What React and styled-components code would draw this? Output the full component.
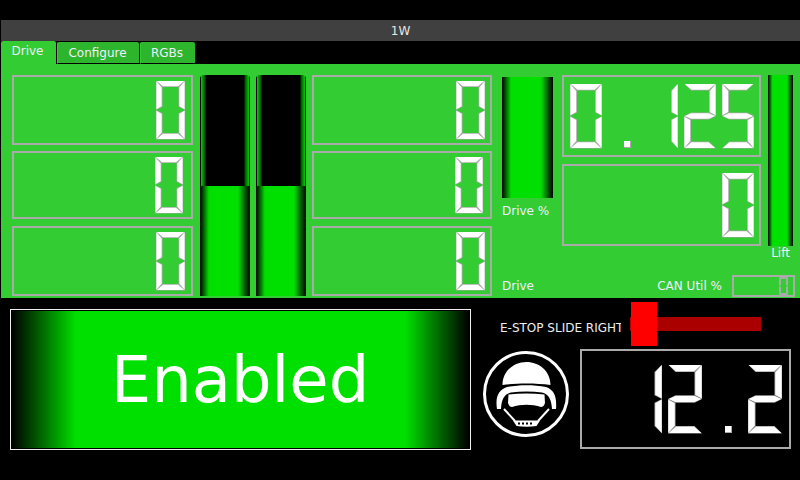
import styled, { createGlobalStyle } from 'styled-components';

const GlobalStyle = createGlobalStyle`
  html, body {
    margin: 0;
    background: #000;
  }
  body {
    width: 800px;
    height: 480px;
    overflow: hidden;
    font-family: "DejaVu Sans", sans-serif;
    font-size: 12px;
  }
`;

const GRAY = '#aaa';
const BAR_GREEN = '#00e000';

const Screen = styled.div`
  width: 800px;
  height: 480px;
  padding-top: 20px;
  box-sizing: border-box;
  display: flex;
  flex-direction: column;
  background: #000;
`;

const TitleBar = styled.div`
  height: 21px;
  margin-left: 1px;
  background: #404040;
  color: #e6e6e6;
  display: flex;
  align-items: center;
  justify-content: center;
`;

const TabBar = styled.div`
  height: 23px;
  display: flex;
  align-items: flex-start;
  padding-left: 1px;
`;

const Tab = styled.div`
  box-sizing: border-box;
  width: ${({ $width }) => $width}px;
  height: ${({ $active }) => ($active ? 23 : 22)}px;
  margin-top: ${({ $active }) => ($active ? 0 : 1)}px;
  margin-right: 1px;
  border-radius: 2px 2px 0 0;
  background: ${({ $active }) => ($active ? '#33cc33' : '#2db52d')};
  border-left: ${({ $active }) => ($active ? 'none' : '1px solid #33cc33')};
  border-bottom: ${({ $active }) => ($active ? 'none' : '1px solid #000')};
  color: #eef;
  display: flex;
  align-items: center;
  justify-content: center;
  padding-bottom: ${({ $active }) => ($active ? 3 : 0)}px;
  padding-right: 2px;
`;

const DrivePanel = styled.div`
  box-sizing: border-box;
  height: 234px;
  margin-left: 1px;
  padding: 11px 5px 1px 11px;
  background: #33cc33;
  display: flex;
  color: #eef;
`;

const LcdColumn = styled.div`
  width: ${({ $width }) => $width}px;
  height: 221px;
  display: flex;
  flex-direction: column;
`;

const LcdFrame = styled.div`
  box-sizing: border-box;
  width: ${({ $width }) => ($width ? `${$width}px` : 'auto')};
  height: ${({ $height }) => $height}px;
  margin: ${({ $gapTop }) => $gapTop || 0}px 0 ${({ $gapBottom }) => $gapBottom || 0}px;
  padding-right: ${({ $pad }) => $pad}px;
  border: 2px solid ${GRAY};
  display: flex;
  align-items: center;
  justify-content: flex-end;
`;

const LcdRow = styled.div`
  display: flex;
  gap: ${({ $gap }) => $gap}px;
`;

const Digit = styled.div`
  width: ${({ $w }) => $w}px;
  height: ${({ $h }) => $h}px;
  display: grid;
`;

const Segment = styled.div`
  grid-area: 1 / 1;
  background: ${({ $tone }) => $tone};
  clip-path: ${({ $points }) => `polygon(${$points})`};
`;

const DotSlot = styled.div`
  box-sizing: border-box;
  width: ${({ $w }) => $w}px;
  padding-left: ${({ $gap }) => $gap}px;
  display: flex;
  align-items: flex-end;
  justify-content: center;
`;

const Dot = styled.div`
  box-sizing: border-box;
  width: ${({ $size }) => $size}px;
  height: ${({ $size }) => $size}px;
  margin-bottom: 1px;
  background: #fff;
  border-right: 1px solid ${GRAY};
  border-bottom: 1px solid ${GRAY};
`;

const BarPair = styled.div`
  display: flex;
  gap: 6px;
  margin: 0 6px 0 7px;
`;

const Bar = styled.div`
  box-sizing: border-box;
  width: ${({ $width }) => $width}px;
  height: ${({ $height }) => $height}px;
  flex: none;
  display: flex;
  flex-direction: column;
  justify-content: flex-end;
  border-radius: ${({ $rounded }) => ($rounded ? '4px 4px 0 0' : '0')};
  background:
    linear-gradient(to right, #000 0, #000 1px, #00d000 1px, #005000 5px, #000 6px,
      #000 calc(100% - 6px), #005000 calc(100% - 5px), #00d000 calc(100% - 1px), #000 calc(100% - 1px));
  overflow: hidden;
`;

const BarFill = styled.div`
  background: linear-gradient(to right, #000 0, ${BAR_GREEN} 18%, ${BAR_GREEN} 76%, #000 100%);
`;

const RightSide = styled.div`
  margin-left: 10px;
  width: 293px;
  height: 222px;
  display: flex;
  flex-direction: column;
  justify-content: space-between;
`;

const RightTop = styled.div`
  display: flex;
`;

const DriveColumn = styled.div`
  width: 60px;
  padding-top: 2px;
  flex: none;
`;

const BarLabel = styled.div`
  margin-top: ${({ $top }) => $top}px;
  white-space: nowrap;
  text-align: ${({ $align }) => $align || 'left'};
`;

const FrameStack = styled.div`
  width: 199px;
  display: flex;
  flex-direction: column;
  gap: 7px;
  margin-right: 7px;
`;

const LiftColumn = styled.div`
  width: 25px;
`;

const RightBottom = styled.div`
  display: flex;
  align-items: center;
  justify-content: space-between;
`;

const CanGroup = styled.div`
  display: flex;
  align-items: center;
  gap: 10px;
`;

const LowerArea = styled.div`
  flex: 1;
  display: flex;
  padding-left: 10px;
`;

const StatusBox = styled.div`
  box-sizing: border-box;
  width: 461px;
  height: 141px;
  margin-top: 11px;
  border: 1px solid #eee;
  padding: 1px;
  background: #000;
`;

const StatusFill = styled.div`
  height: 100%;
  background: linear-gradient(to right, #000 0, ${BAR_GREEN} 14%, ${BAR_GREEN} 86%, #000 100%);
  color: #fff;
  font-size: 64px;
  display: flex;
  align-items: center;
  justify-content: center;
  padding-right: 1px;
`;

const SideColumn = styled.div`
  margin-left: 9px;
  display: flex;
  flex-direction: column;
`;

const EstopRow = styled.div`
  height: 44px;
  margin-top: 4px;
  padding-left: 20px;
  display: flex;
  align-items: center;
`;

// the label is wider than its slot on the device, the last letter gets cut
const EstopLabel = styled.div`
  width: 121px;
  margin: 8px 9px 0 0;
  overflow: hidden;
  white-space: nowrap;
  color: #eee;
`;

const EstopSlider = styled.div`
  position: relative;
  width: 131px;
  height: 44px;
  display: flex;
  align-items: center;
`;

const EstopTrack = styled.div`
  width: 100%;
  height: 14px;
  margin-top: -1px;
  background: #aa0000;
`;

const EstopHandle = styled.div`
  position: absolute;
  left: 1px;
  top: 0;
  width: 26px;
  height: 44px;
  background: #f00;
`;

const BatteryRow = styled.div`
  margin-top: 3px;
  display: flex;
  align-items: flex-start;
`;

const Logo = styled.svg`
  width: 88px;
  height: 88px;
  margin: 1px 10px 0 2px;
  flex: none;
`;

// seven segment geometry, same mitred corners on every size
const segmentShapes = (w, h, t, i) => {
  const m = h / 2;
  const ht = t / 2;
  const pts = (list) => list.map(([x, y]) => `${x}px ${y}px`).join(',');
  return {
    a: pts([[i, i / 2], [w - i, i / 2], [w - t - i / 2, t - i], [t + i / 2, t - i]]),
    b: pts([[w - i / 2, i], [w - i / 2, m - i], [w - t + i, m - ht - i / 2], [w - t + i, t + i / 2]]),
    c: pts([[w - i / 2, m + i], [w - i / 2, h - i], [w - t + i, h - t - i / 2], [w - t + i, m + ht + i / 2]]),
    d: pts([[i, h - i / 2], [w - i, h - i / 2], [w - t - i / 2, h - t + i], [t + i / 2, h - t + i]]),
    e: pts([[i / 2, m + i], [i / 2, h - i], [t - i, h - t - i / 2], [t - i, m + ht + i / 2]]),
    f: pts([[i / 2, i], [i / 2, m - i], [t - i, m - ht - i / 2], [t - i, t + i / 2]]),
    g: pts([[i, m], [t, m - ht + i], [w - t, m - ht + i], [w - i, m], [w - t, m + ht - i], [t, m + ht - i]]),
  };
};

const DIGIT_SEGMENTS = {
  0: 'abcdef',
  1: 'bc',
  2: 'abdeg',
  5: 'acdfg',
};

function LcdDigit({ value, w, h, t, plain }) {
  const outer = segmentShapes(w, h, t, 0);
  const inner = segmentShapes(w, h, t, 0.8);
  const lit = DIGIT_SEGMENTS[value].split('');
  return (
    <Digit $w={w} $h={h}>
      {lit.map((s) => <Segment key={s} $tone={GRAY} $points={outer[s]} />)}
      {!plain && lit.map((s) => <Segment key={s + 'i'} $tone="#fff" $points={inner[s]} />)}
    </Digit>
  );
}

function LcdNumber({ value, w, h, t, gap, plain }) {
  return (
    <LcdRow $gap={gap} role="img" aria-label={value}>
      {value.split('').map((c, i) => (
        c === '.'
          ? <DotSlot key={i} $w={w} $gap={gap}><Dot $size={7} /></DotSlot>
          : <LcdDigit key={i} value={c} w={w} h={h} t={t} plain={plain} />
      ))}
    </LcdRow>
  );
}

function LcdStack({ width, pad }) {
  return (
    <LcdColumn $width={width}>
      <LcdFrame $height={70} $pad={pad}>
        <LcdNumber value="0" w={29} h={59} t={6.5} gap={6} />
      </LcdFrame>
      <LcdFrame $height={68} $pad={pad + 2} $gapTop={6} $gapBottom={7}>
        <LcdNumber value="0" w={28} h={57} t={6.5} gap={6} />
      </LcdFrame>
      <LcdFrame $height={70} $pad={pad}>
        <LcdNumber value="0" w={29} h={59} t={6.5} gap={6} />
      </LcdFrame>
    </LcdColumn>
  );
}

function HelmetLogo() {
  return (
    <Logo viewBox="0 0 88 88" role="img" aria-label="helmet logo">
      <circle cx="44" cy="44" r="41.5" fill="none" stroke="#fff" strokeWidth="3" />
      <path fill="#fff" d="M20.500 35 C20.500 21 32 12 44.500 12 C57 12 68.500 21 68.500 35 C54 33 35 33 20.500 35 Z" />
      <path fill="#fff" d="M15 59 C13 46 17 40 25 37 C37 34.500 52 34.500 64 37 C72 40 75 46 74 59 L70 59 C69.500 50 67 44 60 42.500 C50 41 39 41 29 42.500 C22 44 19.500 50 19 59 Z" />
      <path fill="#fff" d="M26.500 44.500 C38 43 51 43 62.500 44.500 L63 53 C62 56 60.500 57 59 57 C50 54 39 54 30 57 C28.500 57 27 56 26 53 Z" />
      <path fill="none" stroke="#fff" strokeWidth="2" d="M22 59 L33 71 M67 59 L56 71" />
      <path fill="#fff" d="M31 70.500 L58 70.500 L54.500 76 C48 77 41 77 34.500 76 Z" />
      <g fill="#000">
        <rect x="36" y="72.500" width="2" height="2" />
        <rect x="40" y="72.500" width="2" height="2" />
        <rect x="44" y="72.500" width="2" height="2" />
        <rect x="48" y="72.500" width="2" height="2" />
      </g>
    </Logo>
  );
}

export default function App() {
  const halfFull = `${(110 / 221) * 100}%`;
  return (
    <>
      <GlobalStyle />
      <Screen>
        <TitleBar>1W</TitleBar>
        <TabBar>
          <Tab $active $width={55}>Drive</Tab>
          <Tab $width={82}>Configure</Tab>
          <Tab $width={55}>RGBs</Tab>
        </TabBar>
        <DrivePanel>
          <LcdStack width={181} pad={6} />
          <BarPair>
            <Bar $rounded $width={50} $height={221}><BarFill style={{ height: halfFull }} /></Bar>
            <Bar $rounded $width={50} $height={221}><BarFill style={{ height: halfFull }} /></Bar>
          </BarPair>
          <LcdStack width={180} pad={5} />
          <RightSide>
            <RightTop>
              <DriveColumn>
                <Bar $width={51} $height={121}><BarFill style={{ height: '100%' }} /></Bar>
                <BarLabel $top={6}>Drive %</BarLabel>
              </DriveColumn>
              <FrameStack>
                <LcdFrame $height={82} $pad={5}>
                  <LcdNumber value="0.125" w={32} h={65} t={7} gap={6} />
                </LcdFrame>
                <LcdFrame $height={82} $pad={5}>
                  <LcdNumber value="0" w={32} h={65} t={7} gap={6} />
                </LcdFrame>
              </FrameStack>
              <LiftColumn>
                <Bar $width={25} $height={171}><BarFill style={{ height: '100%' }} /></Bar>
                <BarLabel $top={0} $align="center">Lift</BarLabel>
              </LiftColumn>
            </RightTop>
            <RightBottom>
              <div>Drive</div>
              <CanGroup>
                <div>CAN Util %</div>
                <LcdFrame $width={63} $height={22} $pad={5}>
                  <LcdNumber value="0" w={9} h={18} t={2} gap={2} plain />
                </LcdFrame>
              </CanGroup>
            </RightBottom>
          </RightSide>
        </DrivePanel>
        <LowerArea>
          <StatusBox>
            <StatusFill>Enabled</StatusFill>
          </StatusBox>
          <SideColumn>
            <EstopRow>
              <EstopLabel>E-STOP SLIDE RIGHT</EstopLabel>
              <EstopSlider>
                <EstopTrack />
                <EstopHandle />
              </EstopSlider>
            </EstopRow>
            <BatteryRow>
              <HelmetLogo />
              <LcdFrame $width={211} $height={100} $pad={7}>
                <LcdNumber value="12.2" w={34} h={69} t={7.5} gap={6} />
              </LcdFrame>
            </BatteryRow>
          </SideColumn>
        </LowerArea>
      </Screen>
    </>
  );
}
